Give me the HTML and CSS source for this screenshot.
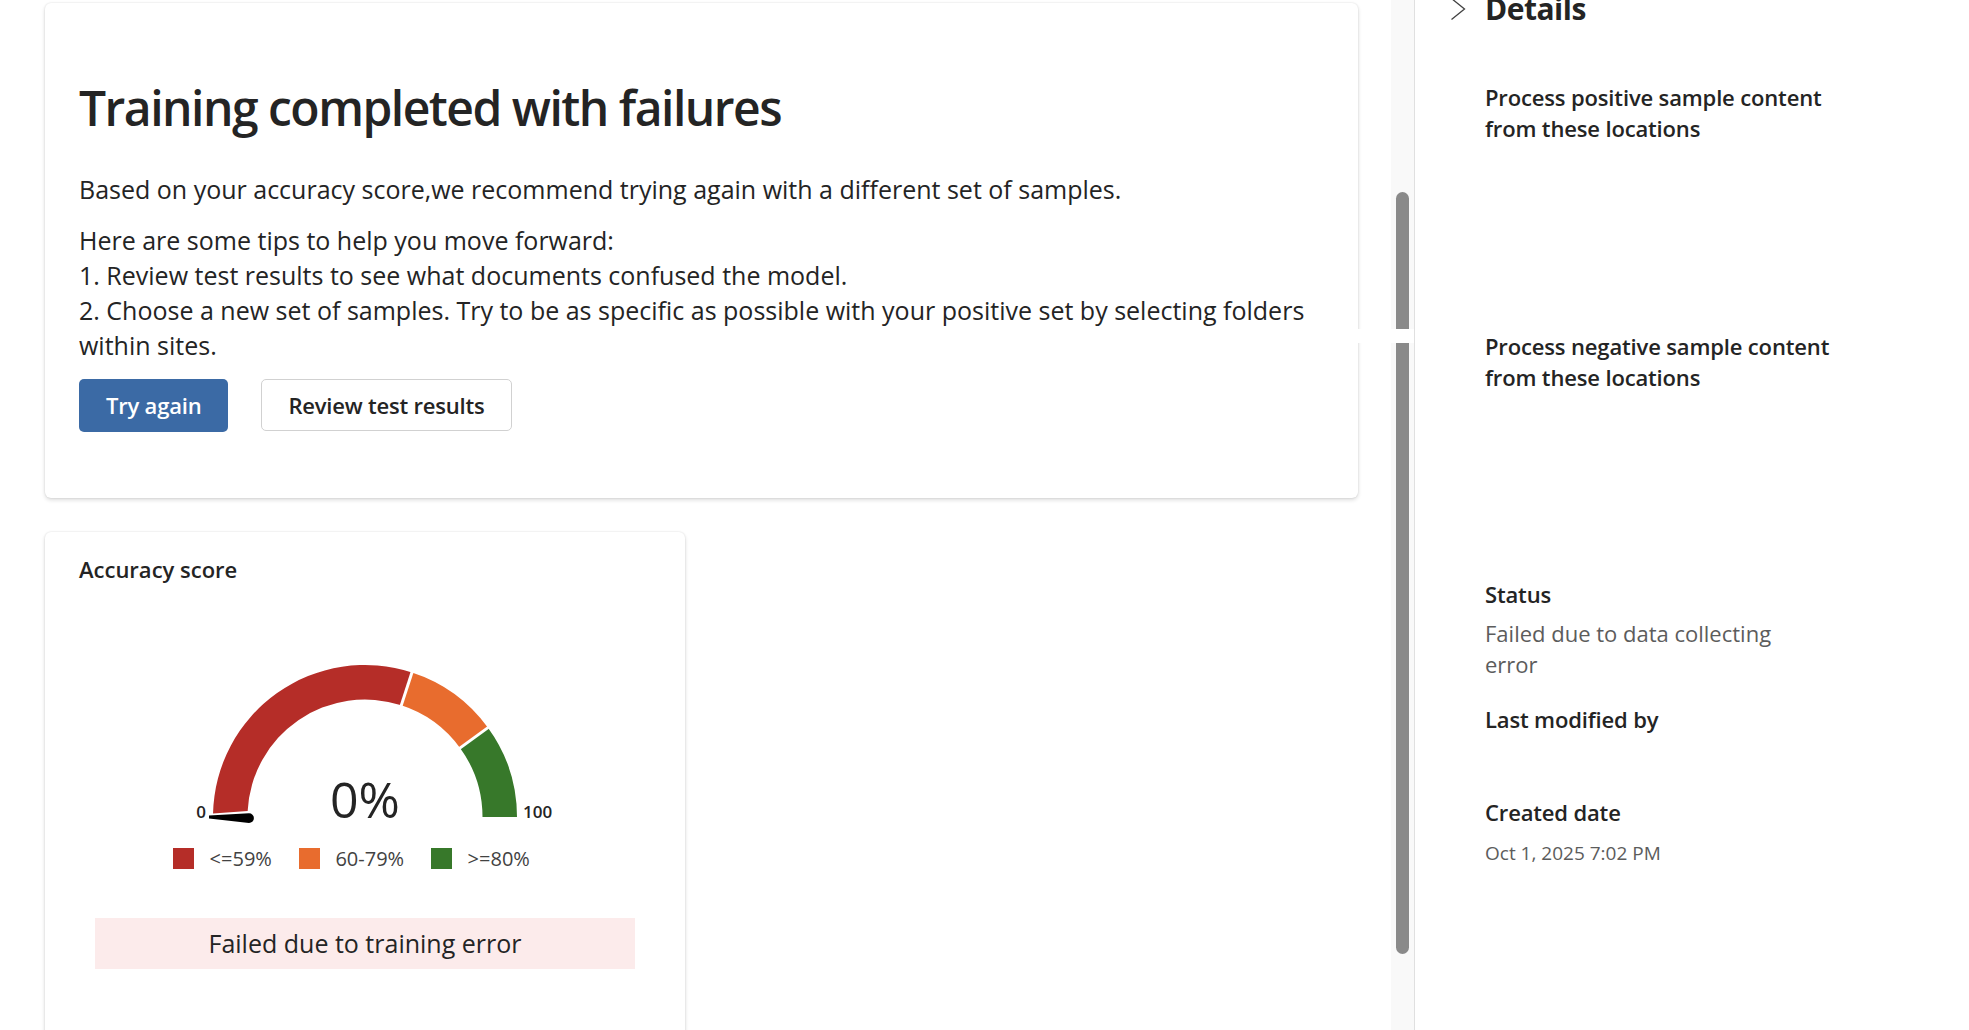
FILE: index.html
```html
<!DOCTYPE html>
<html lang="en">
<head>
<meta charset="utf-8">
<title>Training results</title>
<link rel="stylesheet" href="styles.css">
</head>
<body>
<div class="layout">
  <main class="main">
    <div class="main-content">
      <section class="card summary">
        <h1 class="title">Training completed with failures</h1>
        <p class="lead">Based on your accuracy score,we recommend trying again with a different set of samples.</p>
        <p class="tips">Here are some tips to help you move forward:<br>1. Review test results to see what documents confused the model.<br>2. Choose a new set of samples. Try to be as specific as possible with your positive set by selecting folders within sites.</p>
        <div class="actions">
          <button class="btn btn-primary" type="button">Try again</button>
          <button class="btn btn-secondary" type="button">Review test results</button>
        </div>
      </section>

      <section class="card accuracy">
        <h2 class="card-title">Accuracy score</h2>
        <svg class="gauge" width="400" height="190" viewBox="0 0 400 190" role="img" aria-label="Accuracy gauge at 0%">
          <path class="seg-red" d="M48.04 163.5 A152 152 0 0 1 246.97 22.43 L236.31 55.25 A117.5 117.5 0 0 0 82.65 161 Z"/>
          <path class="seg-orange" d="M246.97 22.43 A152 152 0 0 1 322.97 77.65 L295.06 97.93 A117.5 117.5 0 0 0 236.31 55.25 Z"/>
          <path class="seg-green" d="M322.97 77.65 A152 152 0 0 1 352 167 L317.5 167 A117.5 117.5 0 0 0 295.06 97.93 Z"/>
          <line class="sep" x1="233.99" y1="62.38" x2="248.82" y2="16.73"/>
          <line class="sep" x1="288.99" y1="102.34" x2="327.82" y2="74.13"/>
          <path class="needle" d="M44 165.6 L84 163.2 A4.9 4.9 0 0 1 84 173 L44 168.4 Z"/>
          <text class="tick" x="41" y="168" text-anchor="end">0</text>
          <text class="tick" x="358" y="168">100</text>
          <text class="gauge-value" x="200" y="168" text-anchor="middle">0%</text>
        </svg>
        <ul class="legend">
          <li class="legend-item"><span class="swatch swatch-red"></span>&lt;=59%</li>
          <li class="legend-item"><span class="swatch swatch-orange"></span>60-79%</li>
          <li class="legend-item"><span class="swatch swatch-green"></span>&gt;=80%</li>
        </ul>
        <div class="banner">Failed due to training error</div>
      </section>
    </div>
    <div class="scrollbar"><div class="thumb"></div></div>
    <div class="glitch"></div>
  </main>

  <aside class="details">
    <div class="details-header">
      <svg class="chevron" width="16" height="22" viewBox="0 0 16 22" aria-hidden="true"><path d="M1.5 0.5 L14.5 11 L1.5 21.5"/></svg>
      <h2 class="details-title">Details</h2>
    </div>
    <dl class="fields">
      <dt>Process positive sample content from these locations</dt>
      <dd class="redacted redacted-lg"></dd>
      <dt>Process negative sample content from these locations</dt>
      <dd class="redacted redacted-lg2"></dd>
      <dt>Status</dt>
      <dd class="value">Failed due to data collecting error</dd>
      <dt>Last modified by</dt>
      <dd class="redacted redacted-sm"></dd>
      <dt>Created date</dt>
      <dd class="value value-date">Oct 1, 2025 7:02 PM</dd>
    </dl>
  </aside>
</div>
</body>
</html>
```

FILE: styles.css
```css
* { box-sizing: border-box; }

html, body {
  margin: 0;
  height: 100%;
}

body {
  font-family: "Open Sans", "Noto Sans", "Liberation Sans", sans-serif;
  color: #242424;
  background: #ffffff;
  overflow: hidden;
}

.layout {
  display: flex;
  height: 100vh;
}

/* ---------- main scroll area ---------- */
.main {
  position: relative;
  display: flex;
  flex: 0 0 1414px;
}

.main-content {
  flex: 1;
  padding: 3px 0 0 45px;
  overflow: hidden;
}

.card {
  background: #ffffff;
  border-radius: 6px;
  box-shadow: 0 0 2px rgba(0, 0, 0, 0.12), 0 2px 4px rgba(0, 0, 0, 0.14);
}

.summary {
  width: 1313px;
  padding: 73px 34px 66px;
}

.title {
  margin: 0 0 32px;
  font-size: 48px;
  line-height: 64px;
  font-weight: 600;
  letter-spacing: -1.5px;
}

.lead,
.tips {
  margin: 0;
  font-size: 25px;
  line-height: 35px;
}

.lead { margin-bottom: 16px; }
.tips { margin-bottom: 15.5px; }

.actions {
  display: flex;
  align-items: flex-start;
  gap: 33px;
}

.btn {
  font-family: inherit;
  font-size: 22px;
  font-weight: 600;
  letter-spacing: -0.2px;
  white-space: nowrap;
  border-radius: 5px;
  cursor: pointer;
}

.btn-primary {
  height: 53px;
  padding: 0 27px;
  border: none;
  background: #3b6aa5;
  color: #ffffff;
}

.btn-secondary {
  height: 52px;
  padding: 0 26px;
  border: 1px solid #d1d1d1;
  background: #ffffff;
  color: #242424;
}

/* ---------- accuracy card ---------- */
.accuracy {
  width: 640px;
  min-height: 540px;
  margin-top: 34px;
  padding-top: 22.5px;
}

.card-title {
  margin: 0 0 0 34px;
  font-size: 22px;
  line-height: 30px;
  font-weight: 600;
}

.gauge {
  display: block;
  margin: 65.5px auto 0;
}

.seg-red { fill: #b52d28; }
.seg-orange { fill: #e86c2e; }
.seg-green { fill: #37782a; }

.sep {
  stroke: #ffffff;
  stroke-width: 3;
}

.needle { fill: #000000; }

.tick {
  font-family: "Open Sans", "Noto Sans", sans-serif;
  font-size: 17px;
  font-weight: 600;
  fill: #242424;
}

.gauge-value {
  font-family: "Open Sans", "Noto Sans", sans-serif;
  font-size: 50px;
  fill: #242424;
}

.legend {
  list-style: none;
  margin: 8px 0 0;
  padding: 0 27px 0 0;
  display: flex;
  justify-content: center;
  gap: 27px;
}

.legend-item {
  display: flex;
  align-items: flex-start;
  gap: 15.5px;
  font-size: 20px;
  line-height: 21px;
  color: #424242;
}

.swatch {
  width: 21px;
  height: 21px;
  flex: 0 0 21px;
}

.swatch-red { background: #b52d28; }
.swatch-orange { background: #e86c2e; }
.swatch-green { background: #37782a; }

.banner {
  margin: 49px 50px 0;
  height: 51px;
  display: flex;
  align-items: center;
  justify-content: center;
  background: #fcebeb;
  font-size: 25px;
  color: #242424;
}

/* ---------- decorative scrollbar ---------- */
.scrollbar {
  flex: 0 0 23px;
  background: #f9f9f9;
  padding: 192px 0 0 5px;
}

.thumb {
  width: 13px;
  height: 762px;
  border-radius: 7px;
  background: #8a8a8a;
}

.glitch {
  position: absolute;
  left: 1356px;
  top: 329px;
  width: 58px;
  height: 14px;
  background: #ffffff;
}

/* ---------- details panel ---------- */
.details {
  flex: 1;
  border-left: 1px solid #e0e0e0;
  padding-left: 70px;
  overflow: hidden;
}

.details-header {
  display: flex;
  align-items: center;
  gap: 19px;
  margin: -11px 0 0 -35px;
  height: 40px;
}

.chevron {
  flex: 0 0 16px;
  fill: none;
  stroke: #424242;
  stroke-width: 1.3;
}

.details-title {
  margin: 0;
  font-size: 30px;
  line-height: 40px;
  font-weight: 700;
  letter-spacing: -0.5px;
}

.fields {
  margin: 53px 0 0;
  width: 350px;
}

.fields dt {
  font-size: 22px;
  line-height: 31px;
  font-weight: 600;
  letter-spacing: -0.15px;
}

.fields dd {
  margin: 8px 0 24px;
}

.redacted-lg { height: 155px; }
.redacted-lg2 { height: 154px; }
.redacted-sm { height: 30px; margin-bottom: 23px; }

.value {
  max-width: 300px;
  font-size: 22px;
  line-height: 31px;
  color: #5c5c5c;
}

.fields dd.value-date {
  margin-top: 11.7px;
  font-size: 19px;
  line-height: 26px;
}
```
